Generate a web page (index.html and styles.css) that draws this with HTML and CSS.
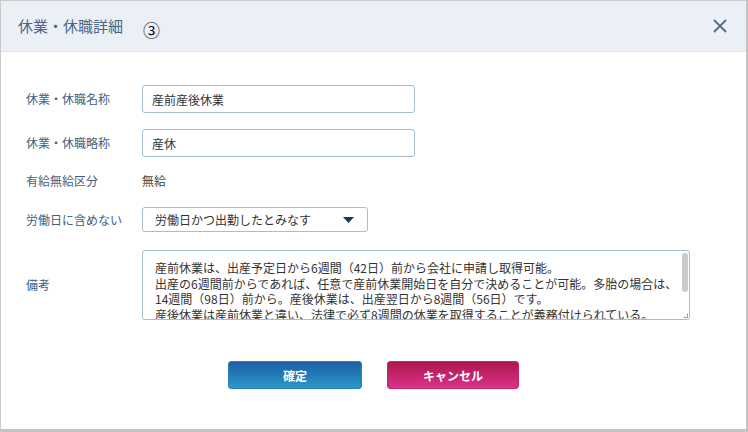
FILE: index.html
```html
<!DOCTYPE html>
<html lang="ja">
<head>
<meta charset="utf-8">
<link rel="stylesheet" href="styles.css">
</head>
<body>
<div class="dialog">
  <header class="dlg-head">
    <h1 class="dlg-title">休業・休職詳細</h1>
    <span class="step">③</span>
    <button class="close" aria-label="閉じる">
      <svg width="14" height="14" viewBox="0 0 14 14"><path d="M1 1L13 13M13 1L1 13" stroke="#5b7189" stroke-width="2" fill="none"/></svg>
    </button>
  </header>
  <div class="dlg-body">
    <div class="row r1">
      <span class="lbl">休業・休職名称</span>
      <div class="field w-input">産前産後休業</div>
    </div>
    <div class="row r2">
      <span class="lbl">休業・休職略称</span>
      <div class="field w-input">産休</div>
    </div>
    <div class="row r3">
      <span class="lbl">有給無給区分</span>
      <span class="val">無給</span>
    </div>
    <div class="row r4">
      <span class="lbl">労働日に含めない</span>
      <div class="select">
        <span>労働日かつ出勤したとみなす</span>
        <svg class="caret" width="11" height="6" viewBox="0 0 11 6"><path d="M0 0H11L5.5 6Z" fill="#1d3658"/></svg>
      </div>
    </div>
    <div class="row r5">
      <span class="lbl">備考</span>
      <div class="memo-wrap">
        <textarea class="memo">産前休業は、出産予定日から6週間（42日）前から会社に申請し取得可能。
出産の6週間前からであれば、任意で産前休業開始日を自分で決めることが可能。多胎の場合は、
14週間（98日）前から。産後休業は、出産翌日から8週間（56日）です。
産後休業は産前休業と違い、法律で必ず8週間の休業を取得することが義務付けられている。
ただし、産後6週間を経過し、本人が請求し医師が認めた場合は就業可能。
</textarea>
        <span class="thumb"></span>
        <svg class="grip" width="5" height="5" viewBox="0 0 5 5"><path d="M4.5 0.5V4.5H0.5" stroke="#9a9a9a" stroke-width="1" fill="none"/></svg>
      </div>
    </div>
    <div class="actions">
      <button class="btn btn-ok">確定</button>
      <button class="btn btn-cancel">キャンセル</button>
    </div>
  </div>
</div>
</body>
</html>
```

FILE: styles.css
```css
html, body {
  margin: 0;
  padding: 0;
  background: #ffffff;
}
body {
  font-family: "Noto Sans CJK JP", "Noto Sans", sans-serif;
  font-size: 12px;
  color: #333333;
}
.dialog {
  box-sizing: border-box;
  width: 748px;
  height: 432px;
  border-top: 1px solid #cacaca;
  border-left: 1px solid #cacaca;
  border-right: 2px solid #c4c4c4;
  border-bottom: 3px solid #c4c4c4;
  background: #ffffff;
  display: flex;
  flex-direction: column;
}
.dlg-head {
  height: 50px;
  background: #eaf0f5;
  border-bottom: 1px solid #dde4ea;
  display: flex;
  align-items: center;
  padding-left: 17px;
  padding-right: 19px;
}
.dlg-title {
  margin: 0;
  font-size: 15px;
  font-weight: normal;
  color: #4d6684;
  line-height: 20px;
}
.step {
  font-family: "Noto Sans CJK JP", sans-serif;
  font-size: 17px;
  color: #111111;
  margin-left: 20px;
  margin-top: 8px;
  line-height: 20px;
}
.close {
  margin-left: auto;
  border: 0;
  background: transparent;
  padding: 0;
  width: 14px;
  height: 14px;
  display: flex;
}
.dlg-body {
  padding: 33px 0 0 25px;
  display: flex;
  flex-direction: column;
}
.row {
  display: flex;
  align-items: center;
}
.r2 { margin-top: 16px; }
.r3 { margin-top: 12px; height: 24px; }
.r4 { margin-top: 14px; }
.r5 { margin-top: 18px; }
.lbl {
  width: 116px;
  flex: none;
  color: #42607f;
  font-size: 12px;
  line-height: 16px;
}
.val {
  color: #444444;
  line-height: 16px;
}
.field {
  box-sizing: border-box;
  height: 28px;
  border: 1px solid #a7bdd3;
  border-radius: 3px;
  padding: 0 9px;
  display: flex;
  align-items: center;
  color: #333333;
  font-size: 12px;
}
.w-input { width: 273px; }
.select {
  box-sizing: border-box;
  width: 226px;
  height: 25px;
  border: 1px solid #a7bdd3;
  border-radius: 3px;
  padding: 0 12px 0 12px;
  display: flex;
  align-items: center;
  justify-content: space-between;
  color: #333333;
}
.caret { margin-right: 1px; }
.memo-wrap {
  position: relative;
  width: 548px;
  height: 70px;
}
.memo {
  display: block;
  box-sizing: border-box;
  width: 548px;
  height: 70px;
  margin: 0;
  border: 1px solid #a7bdd3;
  border-radius: 3px;
  padding: 9px 10px 6px 12px;
  font-family: "Noto Sans CJK JP", "Noto Sans", sans-serif;
  font-size: 12px;
  line-height: 15.5px;
  color: #333333;
  overflow: hidden;
  white-space: pre;
  resize: none;
}
.thumb {
  position: absolute;
  right: 2px;
  top: 3px;
  width: 6px;
  height: 39px;
  background: #cbcbcb;
  border-radius: 3px;
}
.grip {
  position: absolute;
  right: 2px;
  bottom: 2px;
}
.actions {
  display: flex;
  justify-content: center;
  gap: 25px;
  margin-top: 41px;
  margin-left: -25px;
}
.btn {
  box-sizing: border-box;
  height: 28px;
  border-radius: 3px;
  color: #ffffff;
  font-family: "Noto Sans CJK JP", sans-serif;
  font-weight: bold;
  font-size: 12px;
  padding: 0;
}
.btn-ok {
  width: 134px;
  border: 1px solid #2a7fbd;
  background: linear-gradient(#1b5fa6, #2b98c7);
}
.btn-cancel {
  width: 132px;
  border: 1px solid #c9286e;
  background: linear-gradient(#ad174d, #da318b);
}
```
